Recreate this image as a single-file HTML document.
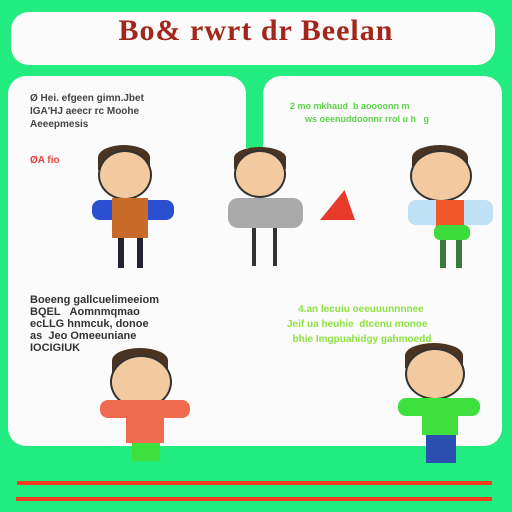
<!DOCTYPE html>
<html><head><style>
*{margin:0;padding:0;box-sizing:border-box}
body{width:512px;height:512px;background:#22ec80;position:relative;overflow:hidden;font-family:"Liberation Sans",sans-serif}
.a{position:absolute}
.w{background:#fbfbfb}
.t{position:absolute;font-weight:bold;font-size:10px;line-height:13px;white-space:nowrap}
.head{border-radius:50%;background:#f3c9a0;border:2px solid #333}
.hair{background:#4a3320;border-radius:50% 50% 0 0}
</style></head><body>
<div class="a w" style="left:11px;top:12px;width:484px;height:53px;border-radius:18px"></div>
<div class="a" style="left:0;top:14px;width:512px;text-align:center;font-family:'Liberation Serif',serif;font-weight:bold;font-size:30px;color:#a3261a;letter-spacing:1px">Bo&amp; rwrt dr Beelan</div>
<div class="a w" style="left:8px;top:76px;width:238px;height:370px;border-radius:18px"></div>
<div class="a w" style="left:263px;top:76px;width:239px;height:370px;border-radius:18px"></div>
<div class="a w" style="left:200px;top:148px;width:100px;height:298px"></div>
<div class="t" style="left:30px;top:92px;color:#444">Ø Hei. efgeen gimn.Jbet<br>IGA'HJ aeecr rc Moohe<br>Aeeepmesis</div>
<div class="t" style="left:30px;top:154px;color:#e84040">ØA fio</div>
<div class="t" style="left:290px;top:100px;color:#5cd24a;font-size:9px">2 mo mkhaud &nbsp;b aoooonn m<br>&nbsp;&nbsp;&nbsp;&nbsp;&nbsp;&nbsp;ws oeenuddoonnr rrol u h &nbsp;&nbsp;g</div>
<div class="t" style="left:30px;top:294px;color:#333;font-size:11px;line-height:12px">Boeeng gallcuelimeeiom<br>BQEL &nbsp;&nbsp;Aomnmqmao<br>ecLLG hnmcuk, donoe<br>as &nbsp;Jeo Omeeuniane<br>IOCIGIUK</div>
<div class="t" style="left:287px;top:302px;color:#8ee040;font-size:10px;line-height:15px">&nbsp;&nbsp;&nbsp;&nbsp;4.an lecuiu oeeuuunnnnee<br>Jeif ua heuhie &nbsp;dtcenu monoe<br>&nbsp;&nbsp;bhie Imgpuahidgy gahmoedd</div>
<!-- characters -->
<div class="a hair" style="left:98px;top:145px;width:52px;height:25px"></div>
<div class="a head" style="left:98px;top:150px;width:54px;height:50px"></div>
<div class="a" style="left:92px;top:200px;width:82px;height:20px;background:#2a4fd0;border-radius:8px"></div>
<div class="a" style="left:112px;top:198px;width:36px;height:40px;background:#c86a2a"></div>
<div class="a" style="left:118px;top:238px;width:6px;height:30px;background:#223"></div><div class="a" style="left:137px;top:238px;width:6px;height:30px;background:#223"></div>

<div class="a hair" style="left:234px;top:147px;width:52px;height:22px"></div>
<div class="a head" style="left:234px;top:150px;width:52px;height:48px"></div>
<div class="a" style="left:228px;top:198px;width:75px;height:30px;background:#aaa;border-radius:10px"></div>
<div class="a" style="left:320px;top:190px;width:35px;height:30px;background:#e83a2a;clip-path:polygon(70% 0,100% 100%,0 100%)"></div>
<div class="a" style="left:252px;top:228px;width:4px;height:38px;background:#333"></div><div class="a" style="left:273px;top:228px;width:4px;height:38px;background:#333"></div>

<div class="a hair" style="left:412px;top:145px;width:56px;height:25px"></div>
<div class="a head" style="left:410px;top:150px;width:62px;height:52px"></div>
<div class="a" style="left:408px;top:200px;width:85px;height:25px;background:#bfe0f5;border-radius:8px"></div>
<div class="a" style="left:436px;top:200px;width:28px;height:30px;background:#f0582a"></div>
<div class="a" style="left:434px;top:225px;width:36px;height:15px;background:#3ddc3d;border-radius:6px"></div>
<div class="a" style="left:440px;top:240px;width:6px;height:28px;background:#3a7a3a"></div><div class="a" style="left:456px;top:240px;width:6px;height:28px;background:#3a7a3a"></div>

<div class="a hair" style="left:112px;top:348px;width:56px;height:25px"></div>
<div class="a head" style="left:110px;top:355px;width:62px;height:54px"></div>
<div class="a" style="left:100px;top:400px;width:90px;height:18px;background:#f06a50;border-radius:8px"></div>
<div class="a" style="left:126px;top:408px;width:38px;height:35px;background:#f06a50"></div>
<div class="a" style="left:132px;top:443px;width:28px;height:18px;background:#3de03d"></div>

<div class="a hair" style="left:405px;top:343px;width:58px;height:25px"></div>
<div class="a head" style="left:405px;top:348px;width:60px;height:52px"></div>
<div class="a" style="left:398px;top:398px;width:82px;height:18px;background:#3de03d;border-radius:8px"></div>
<div class="a" style="left:422px;top:400px;width:36px;height:35px;background:#3de03d"></div>
<div class="a" style="left:426px;top:435px;width:30px;height:28px;background:#2a4fb0"></div>
<!-- red lines -->
<div class="a" style="left:17px;top:481px;width:475px;height:4px;background:#f23c22"></div>
<div class="a" style="left:16px;top:497px;width:476px;height:4px;background:#f23c22"></div>
</body></html>
